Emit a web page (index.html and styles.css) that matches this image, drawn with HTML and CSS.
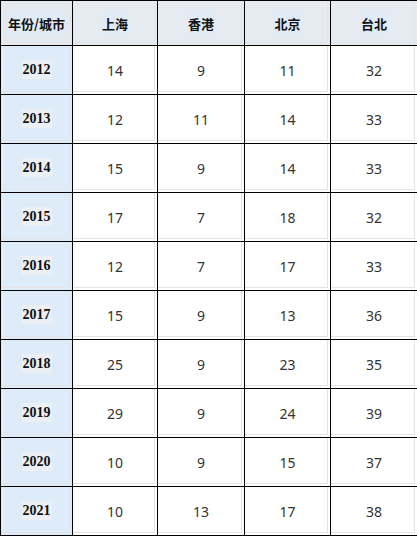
FILE: index.html
```html
<!DOCTYPE html>
<html lang="zh">
<head>
<meta charset="utf-8">
<title>年份/城市</title>
<link rel="stylesheet" href="styles.css">
</head>
<body>
<table class="grid">
  <colgroup>
    <col class="c-year">
    <col class="c-a">
    <col class="c-b">
    <col class="c-c">
    <col class="c-d">
  </colgroup>
  <thead>
    <tr class="head-row">
      <th class="corner"><span class="hl">年份/城市</span></th>
      <th><span class="hl">上海</span></th>
      <th><span class="hl">香港</span></th>
      <th><span class="hl">北京</span></th>
      <th><span class="hl">台北</span></th>
    </tr>
  </thead>
  <tbody>
    <tr><th class="year"><span class="yl">2012</span></th><td>14</td><td>9</td><td>11</td><td>32</td></tr>
    <tr><th class="year"><span class="yl">2013</span></th><td>12</td><td>11</td><td>14</td><td>33</td></tr>
    <tr><th class="year"><span class="yl">2014</span></th><td>15</td><td>9</td><td>14</td><td>33</td></tr>
    <tr><th class="year"><span class="yl">2015</span></th><td>17</td><td>7</td><td>18</td><td>32</td></tr>
    <tr><th class="year"><span class="yl">2016</span></th><td>12</td><td>7</td><td>17</td><td>33</td></tr>
    <tr><th class="year"><span class="yl">2017</span></th><td>15</td><td>9</td><td>13</td><td>36</td></tr>
    <tr><th class="year"><span class="yl">2018</span></th><td>25</td><td>9</td><td>23</td><td>35</td></tr>
    <tr><th class="year"><span class="yl">2019</span></th><td>29</td><td>9</td><td>24</td><td>39</td></tr>
    <tr><th class="year"><span class="yl">2020</span></th><td>10</td><td>9</td><td>15</td><td>37</td></tr>
    <tr><th class="year"><span class="yl">2021</span></th><td>10</td><td>13</td><td>17</td><td>38</td></tr>
  </tbody>
</table>
</body>
</html>
```
FILE: styles.css
```css
html, body {
  margin: 0;
  padding: 0;
  background: #ffffff;
}

.grid {
  width: 417px;
  table-layout: fixed;
  border-collapse: collapse;
  font-family: "Noto Sans", "Noto Sans CJK SC", sans-serif;
}

.c-year { width: 72px; }
.c-a { width: 85px; }
.c-b { width: 87px; }
.c-c { width: 86px; }
.c-d { width: 87px; }

.grid th,
.grid td {
  --bg: #ffffff;
  border: 1px solid #000000;
  padding: 0;
  text-align: center;
  vertical-align: middle;
  background: var(--bg);
  box-shadow: inset -2px -2px 0 var(--bg), inset -3px -3px 0 #e4e4e4;
}

.head-row { height: 45px; }
tbody tr { height: 49px; }

.head-row th {
  --bg: #e6ebf1;
  font-family: "Noto Sans CJK SC", sans-serif;
  font-weight: 700;
  font-size: 13px;
  color: #111111;
}

.head-row th.corner {
  --bg: #e4e9f0;
}

.hl {
  background: #e0ebf8;
  padding: 2px 0;
}

.grid th.year {
  --bg: #deebf8;
  font-family: "Liberation Serif", serif;
  font-weight: 700;
  font-size: 14px;
  color: #111111;
}

.yl {
  background: #eceff3;
  padding: 2px 1px;
}

.grid td {
  font-size: 14px;
  color: #333333;
}
```
